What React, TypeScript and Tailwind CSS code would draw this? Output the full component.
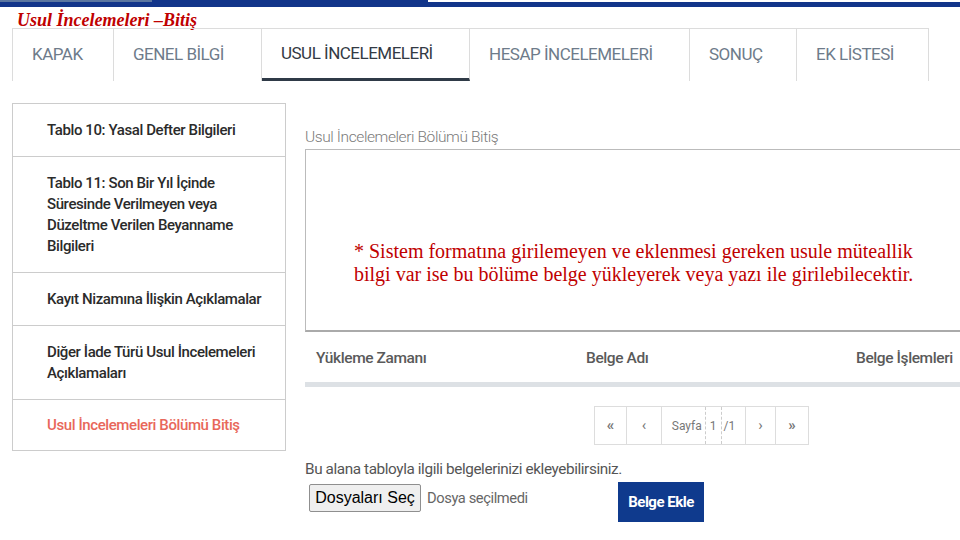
import React from "react";

const cond = { fontFamily: "Roboto, 'Open Sans', sans-serif" } as const;

const tabs = [
  { label: "KAPAK", w: "w-[102px]" },
  { label: "GENEL BİLGİ", w: "w-[148px]" },
  { label: "USUL İNCELEMELERİ", w: "w-[208px]", active: true },
  { label: "HESAP İNCELEMELERİ", w: "w-[220px]" },
  { label: "SONUÇ", w: "w-[107px]" },
  { label: "EK LİSTESİ", w: "w-[132px]" },
];

const side = [
  { lines: ["Tablo 10: Yasal Defter Bilgileri"], h: "h-[52px]" },
  {
    lines: ["Tablo 11: Son Bir Yıl İçinde", "Süresinde Verilmeyen veya", "Düzeltme Verilen Beyanname", "Bilgileri"],
    h: "h-[116px]",
  },
  { lines: ["Kayıt Nizamına İlişkin Açıklamalar"], h: "h-[53px]" },
  { lines: ["Diğer İade Türü Usul İncelemeleri", "Açıklamaları"], h: "h-[74px]" },
  { lines: ["Usul İncelemeleri Bölümü Bitiş"], h: "h-[51px]", red: true },
];

export default function App() {
  return (
    <div className="w-[960px] h-[540px] overflow-hidden bg-white relative" style={cond}>
      {/* top bar */}
      <div className="flex h-[2px]">
        <div className="w-[152px] bg-[#5b76a0]" />
        <div className="w-[276px] bg-[#12358a]" />
        <div className="flex-1 bg-white" />
      </div>
      <div className="h-[5px] bg-[#12358a]" />

      {/* title */}
      <div
        className="h-[21px] pl-[17px] text-[18px] leading-[26px] font-bold italic text-[#c00000]"
        style={{ fontFamily: "'Liberation Serif', serif" }}
      >
        Usul İncelemeleri –Bitiş
      </div>

      {/* tabs */}
      <div className="ml-[12px] flex h-[53px]">
        {tabs.map((t, i) => (
          <div
            key={t.label}
            className={`${t.w} h-full flex items-center pl-[19px] border-t border-r border-[#dcdcdc] text-[17px] tracking-[-0.5px] ${
              i === 0 ? "border-l" : ""
            } ${t.active ? "text-[#333a44] border-b-[3px] border-b-[#2f3a47]" : "text-[#6e7b8a]"}`}
          >
            {t.label}
          </div>
        ))}
      </div>

      {/* content */}
      <div className="flex items-start mt-[22px]">
        {/* sidebar */}
        <div className="ml-[12px] w-[274px] border border-[#cccccc] flex flex-col">
          {side.map((s, i) => (
            <div
              key={i}
              className={`${s.h} flex flex-col justify-center pl-[34px] ${i > 0 ? "border-t border-[#cccccc]" : ""} text-[15px] leading-[21px] font-medium tracking-[-0.4px] ${
                s.red ? "text-[#e8675a]" : "text-[#2b2b2b]"
              }`}
            >
              {s.lines.map((l) => (
                <div key={l} className="whitespace-nowrap">{l}</div>
              ))}
            </div>
          ))}
        </div>

        {/* right column */}
        <div className="ml-[19px] flex-1 min-w-0">
          <div className="h-[20px] mt-[24px] text-[15.5px] leading-[20px] text-[#7a7a7a] tracking-[-0.4px] font-light">
            Usul İncelemeleri Bölümü Bitiş
          </div>
          <div className="mt-[2px] w-[700px] h-[183px] border border-[#bbbbbb] border-b-[2px] border-b-[#aaaaaa] pl-[48px] pt-[90px]">
            <div
              className="text-[20px] leading-[23px] text-[#c00000] whitespace-nowrap"
              style={{ fontFamily: "'Liberation Serif', serif" }}
            >
              <div>* Sistem formatına girilemeyen ve eklenmesi gereken usule müteallik</div>
              <div>bilgi var ise bu bölüme belge yükleyerek veya yazı ile girilebilecektir.</div>
            </div>
          </div>

          {/* table header */}
          <div className="w-[700px] h-[50px] flex items-center pl-[11px] pt-[4px] text-[15.5px] font-medium text-[#5a5a5a] tracking-[-0.4px]">
            <div className="w-[270px]">Yükleme Zamanı</div>
            <div className="w-[270px]">Belge Adı</div>
            <div>Belge İşlemleri</div>
          </div>
          <div className="w-[700px] h-[5px] bg-[#dde1e5]" />

          {/* pagination */}
          <div className="mt-[19px] ml-[289px] flex h-[39px] w-[215px] border border-[#dddddd] text-[12px] text-[#777777]">
            <div className="w-[32px] flex items-center justify-center border-r border-[#dddddd] text-[15px] font-bold">«</div>
            <div className="w-[35px] flex items-center justify-center border-r border-[#dddddd] text-[15px]">‹</div>
            <div className="w-[84px] flex items-center justify-center border-r border-[#dddddd]">
              <span className="mr-[3px]">Sayfa</span>
              <span className="border-l border-r border-dashed border-[#cccccc] px-[4px] h-full flex items-center">1</span>
              <span className="ml-[2px]">/1</span>
            </div>
            <div className="w-[30px] flex items-center justify-center border-r border-[#dddddd] text-[15px]">›</div>
            <div className="flex-1 flex items-center justify-center text-[15px] font-bold">»</div>
          </div>

          {/* help text */}
          <div className="mt-[15px] h-[18px] text-[15.3px] leading-[18px] text-[#555555] tracking-[-0.4px]">
            Bu alana tabloyla ilgili belgelerinizi ekleyebilirsiniz.
          </div>

          {/* file row */}
          <div className="mt-[4px] flex items-start">
            <div className="ml-[4px] mt-[2px] h-[28px] w-[112px] bg-[#efefef] border border-[#8f8f8f] rounded-[2px] flex items-center justify-center text-[16px] text-black" style={{ fontFamily: "'Liberation Sans', Arial, sans-serif" }}>
              Dosyaları Seç
            </div>
            <div className="ml-[6px] mt-[2px] w-[103px] h-[28px] flex items-center text-[14.7px] text-[#666666] tracking-[-0.4px]">
              Dosya seçilmedi
            </div>
            <div className="ml-[88px] h-[40px] w-[86px] bg-[#0f3a8d] flex items-center justify-center text-white text-[15px] font-bold tracking-[-0.5px]">
              Belge Ekle
            </div>
          </div>
        </div>
      </div>
    </div>
  );
}
